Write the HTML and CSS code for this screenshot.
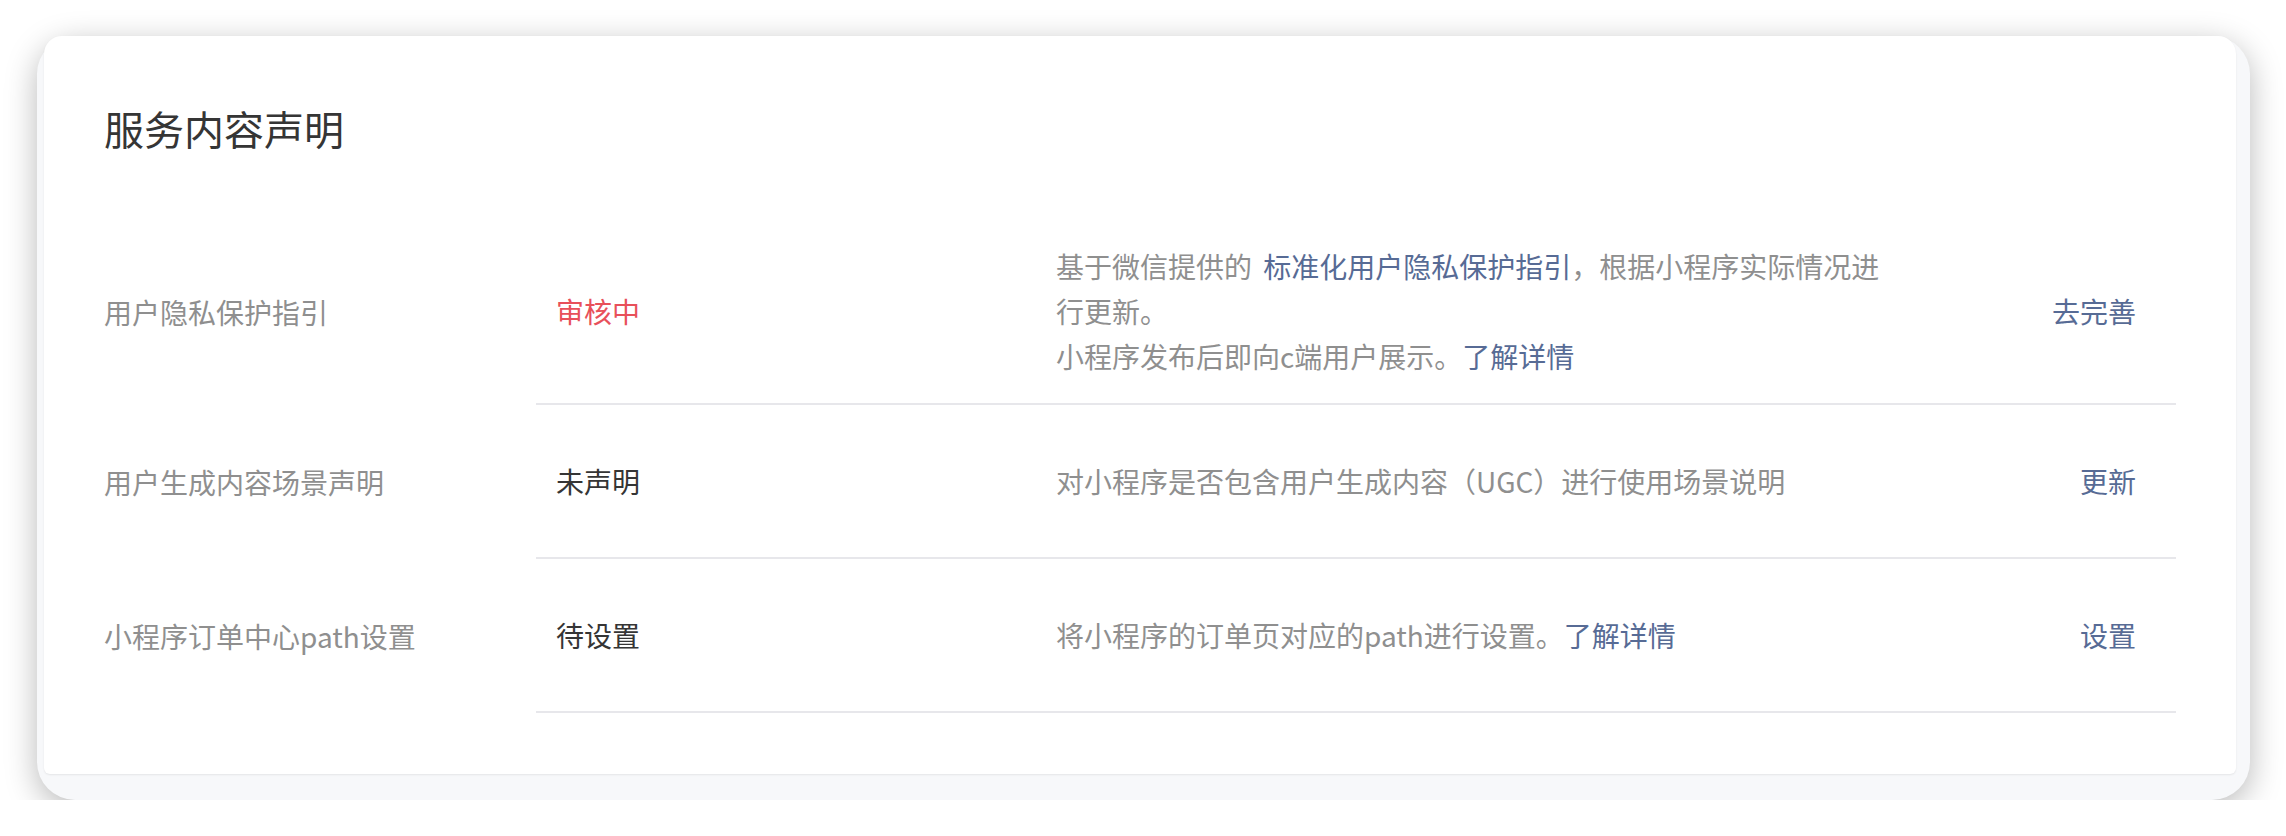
FILE: index.html
```html
<!DOCTYPE html>
<html lang="zh-CN">
<head>
<meta charset="utf-8">
<title>服务内容声明</title>
<link rel="stylesheet" href="styles.css">
</head>
<body>
<div class="window">
  <div class="card">
    <h2 class="title">服务内容声明</h2>
    <div class="list">
      <div class="row">
        <div class="label">用户隐私保护指引</div>
        <div class="main">
          <div class="status status-warn">审核中</div>
          <div class="desc">基于微信提供的 <a class="link link-std">标准化用户隐私保护指引</a>，根据小程序实际情况进行更新。<br>小程序发布后即向c端用户展示。<a class="link">了解详情</a></div>
          <a class="action">去完善</a>
        </div>
      </div>
      <div class="row">
        <div class="label">用户生成内容场景声明</div>
        <div class="main">
          <div class="status">未声明</div>
          <div class="desc">对小程序是否包含用户生成内容（UGC）进行使用场景说明</div>
          <a class="action">更新</a>
        </div>
      </div>
      <div class="row">
        <div class="label">小程序订单中心path设置</div>
        <div class="main">
          <div class="status">待设置</div>
          <div class="desc">将小程序的订单页对应的path进行设置。<a class="link">了解详情</a></div>
          <a class="action">设置</a>
        </div>
      </div>
    </div>
  </div>
</div>
</body>
</html>
```

FILE: styles.css
```css
* {
  box-sizing: border-box;
}

html, body {
  margin: 0;
  padding: 0;
  background: #ffffff;
}

body {
  font-family: "Noto Sans CJK SC", "Noto Sans", sans-serif;
  color: #353535;
}

.window {
  margin: 36px 36px 0 37px;
  height: 764px;
  padding: 0 14px 26px 7px;
  background: #f7f8fa;
  border-radius: 38px;
  box-shadow: 0 8px 32px rgba(0, 0, 0, 0.28);
  display: flex;
  flex-direction: column;
}

.card {
  flex: 1;
  background: #ffffff;
  border-radius: 18px 18px 6px 6px;
  box-shadow: 0 1px 2px rgba(0, 0, 0, 0.08);
  padding: 64px 60px 0 60px;
}

.title {
  margin: 0 0 64px 0;
  font-size: 40px;
  line-height: 56px;
  font-weight: normal;
  color: #353535;
}

.row {
  display: flex;
  align-items: stretch;
}

.label {
  width: 432px;
  flex: none;
  display: flex;
  align-items: center;
  font-size: 28px;
  line-height: 45px;
  color: #8f8f8f;
}

.main {
  flex: 1;
  display: flex;
  align-items: center;
  min-height: 154px;
  padding: 24px 40px 24px 20px;
  border-bottom: 2px solid #e7e7eb;
  font-size: 28px;
  line-height: 45px;
}

.status {
  width: 500px;
  flex: none;
  color: #353535;
}

.status-warn {
  color: #e8505a;
}

.desc {
  width: 842px;
  flex: none;
  color: #8f8f8f;
}

.link {
  color: #576b95;
  text-decoration: none;
}

.link-std {
  margin-left: 5px;
}

.action {
  margin-left: auto;
  color: #576b95;
  text-decoration: none;
}
```
